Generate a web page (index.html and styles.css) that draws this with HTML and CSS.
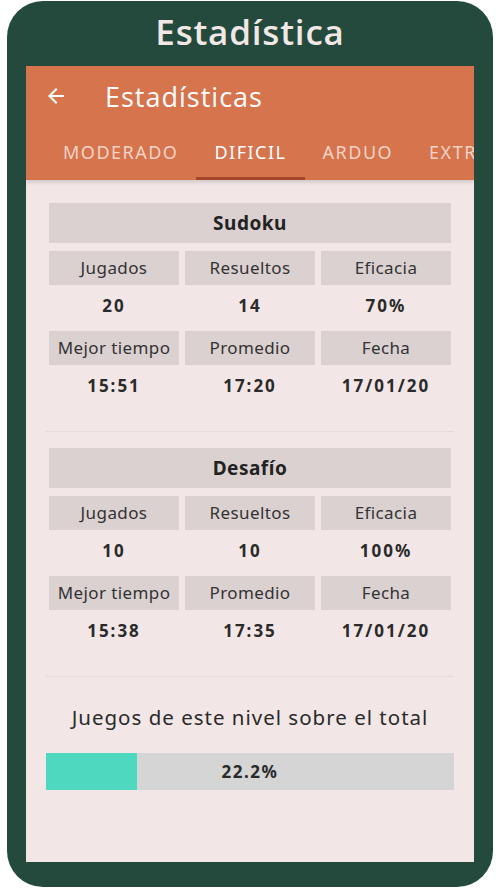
FILE: index.html
```html
<!DOCTYPE html>
<html lang="es">
<head>
    <meta charset="UTF-8">
    <meta name="viewport" content="width=device-width, initial-scale=1.0">
    <title>Estadística</title>
    <link rel="stylesheet" href="styles.css">
</head>
<body>
    <div class="phone">
        <h1 class="caption">Estadística</h1>
        <div class="screen">
            <!-- Toolbar -->
            <div class="toolbar">
                <div class="toolbar-row">
                    <svg class="back" width="24" height="24" viewBox="0 0 24 24">
                        <path d="M20 11H7.83l5.59-5.59L12 4l-8 8 8 8 1.41-1.41L7.83 13H20v-2z" fill="#ffffff"/>
                    </svg>
                    <span class="toolbar-title">Estadísticas</span>
                </div>
                <div class="tabs">
                    <div class="tab">MODERADO</div>
                    <div class="tab active">DIFICIL</div>
                    <div class="tab">ARDUO</div>
                    <div class="tab">EXTREMO</div>
                </div>
            </div>

            <div class="content">
                <!-- Sudoku -->
                <div class="stats">
                    <div class="stats-title">Sudoku</div>
                    <div class="grid">
                        <div class="label">Jugados</div>
                        <div class="label">Resueltos</div>
                        <div class="label">Eficacia</div>
                        <div class="value">20</div>
                        <div class="value">14</div>
                        <div class="value">70%</div>
                        <div class="label">Mejor tiempo</div>
                        <div class="label">Promedio</div>
                        <div class="label">Fecha</div>
                        <div class="value">15:51</div>
                        <div class="value">17:20</div>
                        <div class="value">17/01/20</div>
                    </div>
                </div>
                <hr class="divider">
                <!-- Desafio -->
                <div class="stats">
                    <div class="stats-title">Desafío</div>
                    <div class="grid">
                        <div class="label">Jugados</div>
                        <div class="label">Resueltos</div>
                        <div class="label">Eficacia</div>
                        <div class="value">10</div>
                        <div class="value">10</div>
                        <div class="value">100%</div>
                        <div class="label">Mejor tiempo</div>
                        <div class="label">Promedio</div>
                        <div class="label">Fecha</div>
                        <div class="value">15:38</div>
                        <div class="value">17:35</div>
                        <div class="value">17/01/20</div>
                    </div>
                </div>
                <hr class="divider">
                <!-- Total -->
                <div class="total-text">Juegos de este nivel sobre el total</div>
                <div class="bar">
                    <div class="bar-fill" style="width: 22.2%"></div>
                    <span class="bar-label">22.2%</span>
                </div>
            </div>
        </div>
    </div>
</body>
</html>
```

FILE: styles.css
```css
body {
    margin: 0;
    background: #ffffff;
    font-family: "Noto Sans", sans-serif;
}
.phone {
    margin: 1px 7px 2px 7px;
    height: 886px;
    box-sizing: border-box;
    background: #234a3d;
    border-radius: 36px;
    padding: 0 19px 25px 19px;
    display: flex;
    flex-direction: column;
}
.caption {
    margin: 0;
    height: 65px;
    line-height: 62px;
    text-align: center;
    color: #f1e7e5;
    font-family: "Open Sans", sans-serif;
    font-weight: 600;
    font-size: 35px;
    letter-spacing: 0.8px;
}
.screen {
    flex: 1;
    background: #f2e6e6;
    display: flex;
    flex-direction: column;
    overflow: hidden;
}
.toolbar {
    background: #d6744e;
    box-shadow: 0 2px 4px rgba(0, 0, 0, 0.15);
}
.toolbar-row {
    height: 60px;
    display: flex;
    align-items: center;
    padding-left: 18px;
}
.back {
    margin-right: 37px;
}
.toolbar-title {
    color: #ffffff;
    font-family: "Open Sans", sans-serif;
    font-size: 27px;
    letter-spacing: 1px;
}
.tabs {
    display: flex;
    height: 54px;
    padding-left: 19px;
    white-space: nowrap;
}
.tab {
    padding: 0 18px;
    font-size: 18px;
    letter-spacing: 1.5px;
    color: #f3d3c5;
    line-height: 52px;
    border-bottom: 3px solid transparent;
    box-sizing: border-box;
    height: 54px;
}
.tab.active {
    color: #ffffff;
    border-bottom-color: #a4462a;
}
.content {
    padding: 23px 20px 0 20px;
}
.stats {
    padding: 0 3px;
}
.stats-title {
    background: #dbd1d1;
    height: 40px;
    line-height: 40px;
    text-align: center;
    font-weight: bold;
    font-size: 19px;
    letter-spacing: 0.5px;
    color: #222222;
}
.grid {
    display: grid;
    grid-template-columns: 1fr 1fr 1fr;
    column-gap: 6px;
    margin-top: 8px;
}
.label {
    background: #dbd1d1;
    height: 34px;
    line-height: 34px;
    text-align: center;
    font-size: 17px;
    letter-spacing: 0.4px;
    color: #333333;
}
.value {
    height: 46px;
    line-height: 42px;
    text-align: center;
    font-weight: bold;
    font-size: 17px;
    letter-spacing: 2px;
    color: #2a2a2a;
}
.divider {
    border: 0;
    border-top: 1px solid #e6dada;
    margin: 20px 0 16px 0;
}
.total-text {
    margin-top: 26px;
    text-align: center;
    font-size: 20.5px;
    letter-spacing: 1px;
    color: #2a2a2a;
}
.bar {
    position: relative;
    margin-top: 22px;
    height: 37px;
    background: #d5d5d5;
    display: flex;
    align-items: center;
    justify-content: center;
}
.bar-fill {
    position: absolute;
    left: 0;
    top: 0;
    bottom: 0;
    background: #4fd8c0;
}
.bar-label {
    position: relative;
    font-weight: bold;
    font-size: 17px;
    letter-spacing: 1.5px;
    color: #2a2a2a;
}
```
